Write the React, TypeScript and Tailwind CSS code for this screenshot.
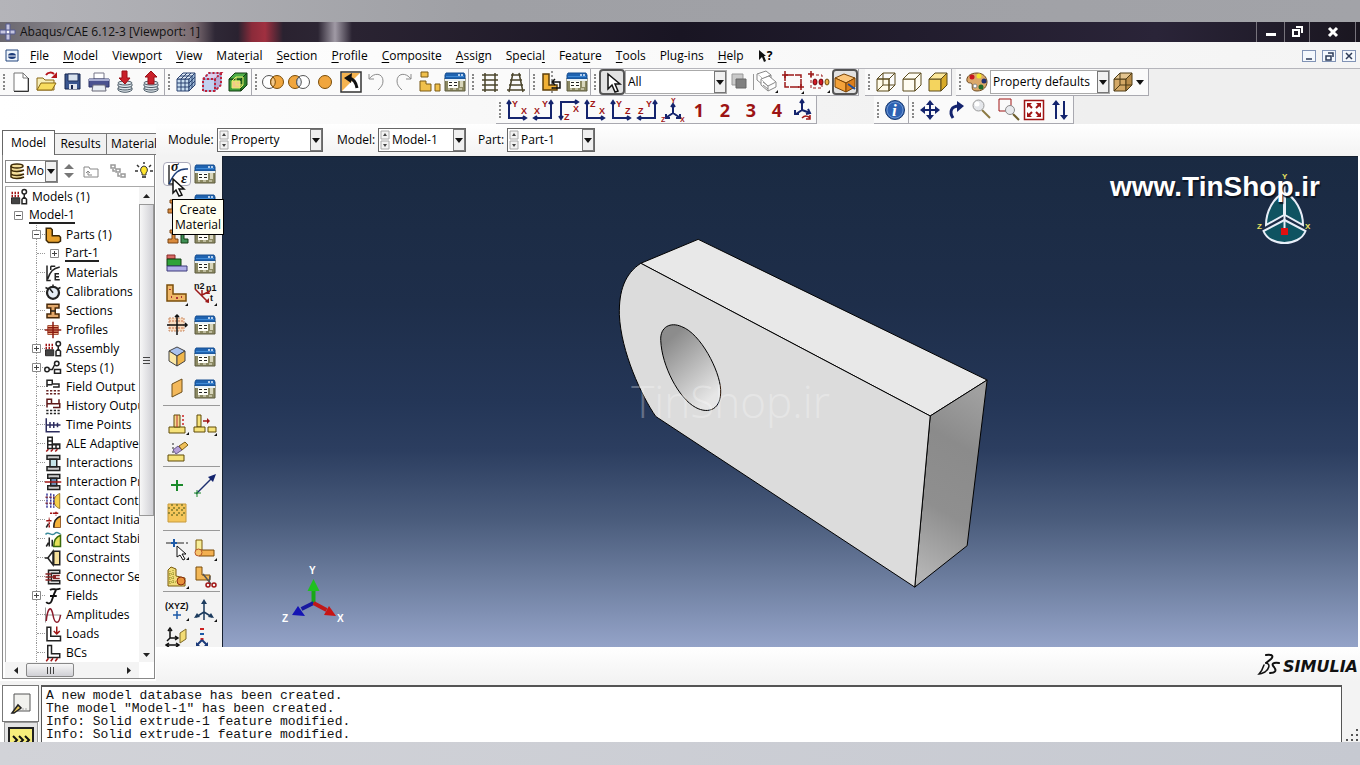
import React, { ReactNode } from "react";

function Svg({ children, size = 24 }: { children: ReactNode; size?: number }) {
  return (
    <svg width={size} height={size} viewBox="0 0 24 24" fill="none" stroke="#222" strokeWidth="1" className="block shrink-0" aria-hidden="true">
      {children}
    </svg>
  );
}

const cubeFront = "M3 9h12v12H3z";
const cubeTop = "M3 9l6-6h12l-6 6z";
const cubeSide = "M15 9l6-6v12l-6 6z";

function TableIcon() {
  return (
    <Svg>
      <path d="M2 8h20v13H2z" fill="#8b8963" stroke="#5c5a3e" />
      <path d="M3 3h18l1 2v4H2V5z" fill="#1f63b0" stroke="#174f91" />
      <path d="M3 6.500h18" stroke="#3f8ad6" />
      <path d="M15 5h2M18 5h2" stroke="#e8f2ff" strokeWidth="1.500" />
      <path d="M2 9h20v2H2z" fill="#e9f1f6" stroke="none" />
      <path d="M5 11h10v7H5z" fill="#fdfdf6" stroke="none" />
      <path d="M6 12.500h3M11 12.500h3M6 15.500h3M11 15.500h3" stroke="#222" />
      <path d="M17 11h3v6h-3z" fill="#d8d6bd" stroke="none" />
      <path d="M5 19h2M10 19h3M16 19h3" stroke="#f1efdc" />
    </Svg>
  );
}

function Cube({ front = "none", top = "none", side = "none", line = "#222", hidden = false, grid = false }: { front?: string; top?: string; side?: string; line?: string; hidden?: boolean; grid?: boolean }) {
  return (
    <Svg>
      <g stroke={line} strokeLinejoin="round">
        <path d={cubeFront} fill={front} />
        <path d={cubeTop} fill={top} />
        <path d={cubeSide} fill={side} />
        {hidden && <path d="M9 3v12h12M9 15l-6 6" />}
        {grid && <path d="M7 9v12M11 9v12M3 13h12M3 17h12M7 9l6-6M11 9l6-6M6 6h12M15 13l6-6M15 17l6-6M18 6v12" />}
      </g>
    </Svg>
  );
}

function Axes({ kind }: { kind: "xy" | "yx" | "xz" | "zx" | "yz" | "zy" }) {
  const left = kind === "yx" || kind === "zy";
  const [v, h] = { xy: ["Y", "X"], yx: ["Y", "X"], xz: ["Z", "X"], zx: ["Z", "X"], yz: ["Y", "Z"], zy: ["Y", "Z"] }[kind];
  if (kind === "xz") {
    return (
      <Svg>
        <path d="M4 21V4h16M2 18l2 3 2-3M18 2l3 2-3 2" stroke="#14246e" strokeWidth="2" />
        <g fill="#a01515" stroke="none" fontFamily="Liberation Sans" fontWeight="bold" fontSize="9">
          <text x="16" y="14">X</text>
          <text x="7" y="22">Z</text>
        </g>
      </Svg>
    );
  }
  return (
    <Svg>
      {left ? (
        <path d="M20 3v17H4M18 6l2-3 2 3M6 18l-3 2 3 2" stroke="#14246e" strokeWidth="2" />
      ) : (
        <path d="M4 3v17h16M2 6l2-3 2 3M18 18l3 2-3 2" stroke="#14246e" strokeWidth="2" />
      )}
      <g fill="#a01515" stroke="none" fontFamily="Liberation Sans" fontWeight="bold" fontSize="9">
        <text x={left ? 11 : 7} y="9">{v}</text>
        <text x={left ? 3 : 16} y="16">{h}</text>
      </g>
    </Svg>
  );
}

const I: Record<string, ReactNode> = {
  newFile: <Svg><path d="M5 3h9l5 5v13H5z" fill="#fff" stroke="#777" /><path d="M14 3v5h5" stroke="#777" /><path d="M5 21.500h14.500V8" stroke="#333" /></Svg>,
  open: <Svg><path d="M2 20V8h6l2 2h9v10z" fill="#f6eeb8" stroke="#8a6914" /><path d="M2 20l4-7h15l-4 7z" fill="#f7dc5e" stroke="#8a6914" /><path d="M11 5c2-3 6-3 8-1" stroke="#b5141b" strokeWidth="2" /><path d="M22 2v6h-6z" fill="#b5141b" stroke="none" /></Svg>,
  save: <Svg><path d="M4 4h15v15H4z" fill="#3a568f" stroke="#16264f" /><path d="M7 4h10v7H7z" fill="#d8e2ee" stroke="#20335f" /><path d="M8 14h8v5H8z" fill="#dfe4ec" stroke="none" /><path d="M10 15h2v4h-2z" fill="#16264f" stroke="none" /></Svg>,
  print: <Svg><path d="M7 3h10v6H7z" fill="#fff" stroke="#778" /><path d="M2 9h20v8H2z" fill="#4b528f" stroke="#2c3568" /><path d="M2 9h20v2H2z" fill="#a6abcf" stroke="none" /><path d="M6 15h12l1 6H5z" fill="#e9edf2" stroke="#667" /></Svg>,
  dbIn: <Svg><g fill="#dde5ea" stroke="#4c5a66"><path d="M5 18v2c3 3 11 3 14 0v-2" /><ellipse cx="12" cy="18" rx="7" ry="2" /><path d="M5 14v2c3 2 11 2 14 0v-2" /><ellipse cx="12" cy="13" rx="7" ry="2" /></g><path d="M9 1h5v7h3l-5 6-6-6h3z" fill="#c9202a" stroke="#9a1018" /></Svg>,
  dbOut: <Svg><g fill="#dde5ea" stroke="#4c5a66"><path d="M5 18v2c3 3 11 3 14 0v-2" /><ellipse cx="12" cy="18" rx="7" ry="2" /><path d="M5 14v2c3 2 11 2 14 0v-2" /><ellipse cx="12" cy="13" rx="7" ry="2" /></g><path d="M9 14h6V7h3l-6-6-6 6h3z" fill="#c9202a" stroke="#9a1018" /></Svg>,
  meshCube: <Cube front="#c9def0" top="#dfeaf6" side="#9dbad8" line="#2a4270" grid />,
  seedCube: <Svg><g fill="#c3d2f0" stroke="#7f86b5"><path d={cubeFront} /><path d={cubeTop} fill="#dcd0ee" /><path d={cubeSide} fill="#b9add8" /></g><path d="M3 9h12v12H3zM3 9l6-6h12l-6 6M21 3v12l-6 6" stroke="#c0203a" strokeWidth="2" strokeDasharray="2 2" /></Svg>,
  greenCube: <Svg><g stroke="#123d12"><path d={cubeFront} fill="#3e9b3a" /><path d={cubeTop} fill="#4fae48" /><path d={cubeSide} fill="#2c7f2a" /><path d="M6 11h8v7H6z" fill="#f2c98a" stroke="#e6ee6a" /><path d="M10 7h7v8h-7z" stroke="#e6ee6a" /><path d="M6 11l4-4M14 18l3-3" stroke="#e6ee6a" /></g></Svg>,
  union: <Svg><circle cx="8" cy="12" r="6.500" fill="#fff" stroke="#555" /><circle cx="16" cy="12" r="6.500" fill="#f0a63e" stroke="#7a4d0a" /><path d="M12 7a6.500 6.500 0 0 1 0 10 6.500 6.500 0 0 1 0-10z" fill="#f3c98c" stroke="#7a4d0a" /></Svg>,
  subtract: <Svg><circle cx="8" cy="12" r="6.500" fill="#f0a63e" stroke="#7a4d0a" /><circle cx="16" cy="12" r="6.500" fill="#fff" stroke="#555" /><path d="M12 7a6.500 6.500 0 0 1 0 10 6.500 6.500 0 0 1 0-10z" fill="#dfe6ee" stroke="#555" /></Svg>,
  circle: <Svg><circle cx="12" cy="12" r="6.500" fill="#f0a63e" stroke="#7a4d0a" /></Svg>,
  replace: <Svg><path d="M2 2h20v20H2z" fill="#fff" stroke="#333" strokeWidth="1.500" /><path d="M3 3h18L3 21z" fill="#f4b350" stroke="none" /><path d="M18 18c-1-6-3-9-8-10" stroke="#111" strokeWidth="3" /><path d="M5 8l8-5-1 10z" fill="#111" stroke="none" /></Svg>,
  undo: <Svg><path d="M4 9c5-7 14-6 14 2 0 4-2 6-5 9M4 4v5h5" stroke="#8c8c8c" /></Svg>,
  redo: <Svg><path d="M20 9C15 2 6 3 6 11c0 4 2 6 5 9M20 4v5h-5" stroke="#8c8c8c" /></Svg>,
  parts: <Svg><path d="M4 2h7v5H4zM3 11h6v3h5v7H3zM18 14h5v7h-5z" fill="#f0c04c" stroke="#7a5a14" /></Svg>,
  table: <TableIcon />,
  ladder: <Svg><path d="M7 3v19M17 3v19M4 5h16M4 10h16M4 15h16M4 20h16" stroke="#4b452c" strokeWidth="1.500" /></Svg>,
  ladder2: <Svg><path d="M9 3L5 22M15 3l4 19M7 5h10M6 10h12M5 15h14M3 20h18" stroke="#4b452c" strokeWidth="1.500" /></Svg>,
  partL: <Svg><path d="M4 4h6v11h8v5H4z" fill="#f0b035" stroke="#5e3f09" strokeWidth="1.500" /><path d="M13 1v23" stroke="#333" strokeDasharray="2 2" /><path d="M13 12h8v6h-8M16 9l-3 3 3 3" stroke="#111" strokeWidth="1.500" /></Svg>,
  arrow: <Svg><path d="M8 4v15l4-4 3 7 3-1-3-7h5z" fill="#fff" stroke="#111" strokeWidth="1.500" /></Svg>,
  layers: <Svg><path d="M4 4h11v11H4z" fill="#c9c9c9" stroke="#999" /><path d="M8 9h10v9H8z" fill="#808080" stroke="#666" /></Svg>,
  stack: <Svg><g stroke="#888" fill="#fff"><path d="M2 4l9-3 5 4-8 4z" /><path d="M2 4v6l6 5V9M8 9l8-4v3" /><path d="M6 9l8-3 7 6-8 4z" /><path d="M6 9v6l7 6v-5M13 21l8-4v-5" /><path d="M8 12l5 4M8 15l5 4" /></g><path d="M20 23h3v-3z" fill="#111" stroke="none" /></Svg>,
  dragRect: <Svg><path d="M4 5h16v12H4z" stroke="#9c1a1a" strokeWidth="1.500" strokeDasharray="9 1" /><path d="M4 1v7M1 5h6M17 17h6M20 14v6" stroke="#9c1a1a" strokeWidth="1.500" /><path d="M20 24h3v-3z" fill="#111" stroke="none" /></Svg>,
  pickDots: <Svg><path d="M4 5h11v13H4z" stroke="#9c1a1a" strokeDasharray="3 2" /><path d="M4 1v6M1 4h6" stroke="#9c1a1a" strokeWidth="1.500" /><ellipse cx="8" cy="12" rx="2" ry="3" fill="#d01722" stroke="#6d0a10" /><ellipse cx="14" cy="12" rx="2" ry="3" fill="#d01722" stroke="#6d0a10" /><ellipse cx="20" cy="12" rx="2" ry="3" fill="#eeb04a" stroke="#6b4a10" /><path d="M20 23h3v-3z" fill="#111" stroke="none" /></Svg>,
  orangeBox: <Svg><path d="M2 8l9-4 11 4-9 5z" fill="#fbc57a" stroke="#7a4406" /><path d="M2 8v9l11 5v-9z" fill="#f3a23a" stroke="#7a4406" /><path d="M13 13l9-5v9l-9 5z" fill="#dc7f1c" stroke="#7a4406" /><path d="M15 14l7 5" stroke="#1f4f9c" strokeWidth="2" /></Svg>,
  wireCube: <Cube line="#5a4a1c" hidden front="#fffbe8" />,
  hiddenCube: <Cube line="#5a4a1c" front="#fffdf2" top="#fffdf2" side="#fffdf2" />,
  shadedCube: <Cube line="#5a4a1c" front="#f4d45e" top="#fbe79a" side="#d8ab2b" />,
  tanCube: <Cube line="#4e3c16" front="#d3a866" top="#e3c48f" side="#b98d4b" hidden />,
  palette: <Svg><path d="M12 3C5 3 1 7 2 11c1 3 4 1 5 3s-2 7 5 7c7 0 10-5 10-9 0-5-4-9-10-9z" fill="#dba86a" stroke="#6b4a20" /><circle cx="7" cy="7" r="2.500" fill="#c9161d" stroke="none" /><circle cx="14" cy="6" r="2.500" fill="#f1e52e" stroke="none" /><circle cx="19" cy="11" r="2.500" fill="#22306e" stroke="none" /><circle cx="16" cy="17" r="2.500" fill="#226b2a" stroke="none" /><circle cx="10" cy="16" r="2" fill="#fff" stroke="#888" /></Svg>,
  iso: <Svg><path d="M12 6v9l-6 4M12 15l6 4M10 9l2-3 2 3M5 16v4h4M19 16v4h-4" stroke="#14246e" strokeWidth="2" /><g fill="#a01515" stroke="none" fontFamily="Liberation Sans" fontWeight="bold" fontSize="7"><text x="10" y="5">Y</text><text x="0" y="24">Z</text><text x="19" y="24">X</text></g></Svg>,
  isoRot: <Svg><path d="M11 3v9l-6 4M11 12l8 3M9 5l2-3 2 3M4 12v4h4M17 11l2 4-4 1" stroke="#14246e" strokeWidth="2" /><path d="M11 20c3-3 6-2 8 0M19 17v4h-4" stroke="#a01515" strokeWidth="1.500" /></Svg>,
  info: <Svg><circle cx="12" cy="12" r="9.500" fill="#2e62b3" stroke="#17386e" /><circle cx="12" cy="12" r="8" stroke="#6d94cf" /><text x="9" y="18" fill="#fff" stroke="none" fontFamily="Liberation Serif" fontStyle="italic" fontWeight="bold" fontSize="17">i</text></Svg>,
  pan: <Svg><path d="M12 5v15M5 12h15" stroke="#14246e" strokeWidth="2" /><path d="M12 2l4 5H8zM12 22l4-5H8zM2 12l5-4v8zM22 12l-5-4v8z" fill="#14246e" stroke="none" /></Svg>,
  rotate: <Svg><path d="M9 20c-4-6-2-12 6-12" stroke="#14246e" strokeWidth="3" /><path d="M13 3l7 5-7 6z" fill="#14246e" stroke="none" /></Svg>,
  zoom: <Svg><path d="M12 12l8 8" stroke="#8b7a42" strokeWidth="2" /><circle cx="8.500" cy="7.500" r="5.500" fill="#e4e6ea" stroke="#9a9a9a" /><circle cx="7" cy="6" r="2.500" fill="#fff" stroke="none" /></Svg>,
  boxZoom: <Svg><path d="M3 1h12v12H3z" stroke="#a01515" /><path d="M17 16l6 6" stroke="#6d5d2c" strokeWidth="2" /><circle cx="14" cy="12" r="4.500" fill="#e8eaee" stroke="#8a8a8a" /></Svg>,
  fit: <Svg><path d="M2.500 2.500h19v19h-19z" fill="#fff" stroke="#a01515" strokeWidth="1.500" /><path d="M6 6l4 4M18 6l-4 4M6 18l4-4M18 18l-4-4" stroke="#a01515" strokeWidth="2" /><path d="M5 5h5l-5 5zM19 5h-5l5 5zM5 19h5l-5-5zM19 19h-5l5-5z" fill="#a01515" stroke="none" /></Svg>,
  upDown: <Svg><path d="M8 5v16M16 3v15" stroke="#14246e" strokeWidth="2" /><path d="M8 2l4 5H4zM16 22l4-5h-8z" fill="#14246e" stroke="none" /></Svg>,
  material: <Svg><path d="M4 3v19h5" stroke="#333" strokeWidth="1.500" /><path d="M4 22C9 11 14 6 23 7" stroke="#1c3e7a" strokeWidth="1.500" /><g fill="#111" stroke="none" fontFamily="Liberation Serif" fontStyle="italic" fontWeight="bold"><text x="6" y="9" fontSize="14">σ</text><text x="16" y="21" fontSize="15">ε</text></g></Svg>,
  beam: <Svg><path d="M5 8h8v3h-3v6h3v4H3v-4h4v-6H5z" fill="#d98a3c" stroke="#7a4512" /><path d="M16 12h3v5h4v4h-7z" fill="#3f8f55" stroke="#123d12" /></Svg>,
  steps: <Svg><path d="M2 3h8v4H2z" fill="#d86a66" stroke="#8a2a26" /><path d="M2 7h14v7H2z" fill="#2fa23a" stroke="#123d12" /><path d="M2 14h20v5H2z" fill="#b0aee8" stroke="#3d3a7b" /></Svg>,
  plate: <Svg><path d="M2 3h6v9h13v7H2z" fill="#f0b868" stroke="#7a4d0a" strokeWidth="1.500" /><path d="M5 7v1M6 15h1M11 16h2M16 15h1" stroke="#a33" strokeWidth="2" /><path d="M20 24h3v-3z" fill="#111" stroke="none" /></Svg>,
  normals: <Svg><path d="M2 7l13 13M9 13l8-4M9 13l0-5" stroke="#9c1a1a" strokeWidth="1.500" /><path d="M15 7l-2 5h4zM16 21v-5l-4 4z" fill="#9c1a1a" stroke="none" /><g fill="#111" stroke="none" fontFamily="Liberation Sans" fontWeight="bold" fontSize="9"><text x="1" y="7">n2</text><text x="13" y="9">n1</text><text x="17" y="19">t</text></g><path d="M21 24h3v-3z" fill="#111" stroke="none" /></Svg>,
  cross: <Svg><path d="M4 5h15v13H4z" fill="#f9dcc0" stroke="#c98a62" strokeDasharray="2 1" /><path d="M4 8h15M4 15h15" stroke="#c9704a" strokeDasharray="2 1" /><path d="M12 2v20M2 12h20M10 4l2-2 2 2M20 10l2 2-2 2" stroke="#111" strokeWidth="1.500" /></Svg>,
  isoCube: <Svg><path d="M4 6l8-4 8 4-8 5z" fill="#a9c2ef" stroke="#444" /><path d="M4 6v10l8 5V11z" fill="#fbe7a4" stroke="#444" /><path d="M12 11l8-5v10l-8 5z" fill="#f0b64a" stroke="#444" /></Svg>,
  skin: <Svg><path d="M7 7l10-5v13L7 20z" fill="#f3b85a" stroke="#6e4f19" /></Svg>,
  stringer: <Svg><path d="M4 15h16v6H4z" fill="#f6e27a" stroke="#5e4a09" /><path d="M9 3h6v12H9z" fill="#f6d88a" stroke="#5e4a09" /><path d="M12 3v12" stroke="#b33" /><path d="M18 3v12" stroke="#c22" strokeWidth="1.500" strokeDasharray="2 2" /><path d="M21 23h3v-3z" fill="#111" stroke="none" /></Svg>,
  partition: <Svg><path d="M4 3h4v12H4z" fill="#f6e27a" stroke="#5e4a09" /><path d="M1 15h11v5H1zM15 15h8v5h-8z" fill="#f6e27a" stroke="#5e4a09" /><path d="M10 9h5" stroke="#a01515" strokeWidth="1.500" /><path d="M14 6l3 3-3 3z" fill="#a01515" stroke="none" /><path d="M21 24h3v-3z" fill="#111" stroke="none" /></Svg>,
  erase: <Svg><path d="M3 15h16v6H3z" fill="#f6e27a" stroke="#5e4a09" /><path d="M8 3v11" strokeDasharray="2 2" /><path d="M13 6l4 4-6 4-3-4z" fill="#b5a0d9" stroke="#6a5a8a" /><path d="M14 6l6-4 3 3-6 5z" fill="#f0c05a" stroke="#7e5f19" /></Svg>,
  plus: <Svg><path d="M12 7v11M6 12h12" stroke="#1a8a2a" strokeWidth="2" /></Svg>,
  axisLine: <Svg><path d="M3 21L20 4" stroke="#1c2f6e" strokeWidth="1.500" /><path d="M23 1l-8 3 5 5z" fill="#14246e" stroke="none" /><path d="M4 17v7M1 20h7" stroke="#1a8a2a" /></Svg>,
  gridIcon: <Svg><path d="M3 3h18v18H3z" fill="#f5c65a" stroke="#c79a3c" /><path d="M7 3v12M12 3v12M17 3v12M3 7h18M3 12h18" stroke="#7d7a2c" strokeWidth="1.500" strokeDasharray="2 3" /></Svg>,
  pickLine: <Svg><path d="M1 6h22" strokeDasharray="8 2" stroke="#222" /><path d="M9 2v8M6 6h6" stroke="#1c5aa8" strokeWidth="2" /><path d="M12 9v11l3-2 3 5 2-1-3-5h4z" fill="#fff" stroke="#111" /><path d="M21 23h3v-3z" fill="#111" stroke="none" /></Svg>,
  lPart: <Svg><path d="M3 3h6v11H3z" fill="#f7ee9a" stroke="#7a5a0a" /><path d="M6 13h15v6H6z" fill="#f3b052" stroke="#7a4d0a" /><circle cx="5.500" cy="15.500" r="3.500" fill="#f7c46a" stroke="#b5562c" /><path d="M21 24h3v-3z" fill="#111" stroke="none" /></Svg>,
  lPart2: <Svg><path d="M3 5l3-3 5 2v7l9 2v8H3z" fill="#f0dc7a" stroke="#7a5a0a" /><path d="M5 6v13M8 5v14M4 9h6M4 13h6M4 17h7" stroke="#8a8a20" strokeDasharray="1 1" /><circle cx="16" cy="16" r="4" fill="#e8923a" stroke="#8a2a10" /><path d="M21 24h3v-3z" fill="#111" stroke="none" /></Svg>,
  scissors: <Svg><path d="M3 2h6v8h8v5H3z" fill="#f3b858" stroke="#7a4d0a" /><path d="M10 9l8 10M17 11l-1 8" stroke="#555" strokeWidth="1.500" /><circle cx="15" cy="20" r="2" stroke="#a01515" strokeWidth="1.500" /><circle cx="21" cy="20" r="2" stroke="#a01515" strokeWidth="1.500" /></Svg>,
  xyz: <Svg><text x="0" y="11" fill="#111" stroke="none" fontFamily="Liberation Sans" fontWeight="bold" fontSize="9">(XYZ)</text><path d="M12 13v8M8 17h8" stroke="#1c5aa8" strokeWidth="1.500" /><path d="M21 23h3v-3z" fill="#111" stroke="none" /></Svg>,
  triad: <Svg><path d="M11 3v19M11 14l-8 5M11 14l8 5" stroke="#1c3b5e" strokeWidth="1.500" /><path d="M11 1l3 5H8zM1 20l3-5 3 4zM21 20l-3-5-3 4z" fill="#1c3b5e" stroke="none" /><path d="M21 24h3v-3z" fill="#111" stroke="none" /></Svg>,
  datum: <Svg><path d="M5 4v8h7M5 12l-3 3M3 5l2-3 2 3M10 10l3 2-3 2" stroke="#111" strokeWidth="1.500" /><path d="M15 7l6-4v10l-6 4z" fill="#f3dc74" stroke="#7e6a29" /><path d="M2 19h11M4 17l-3 2 3 2M11 17l3 2-3 2" stroke="#111" strokeWidth="1.500" /></Svg>,
  datum2: <Svg><path d="M9 2v2" stroke="#c22" strokeWidth="4" /><path d="M9 7v2" stroke="#1c5aa8" strokeWidth="4" /><path d="M9 12v2" stroke="#c22" strokeWidth="3" /><path d="M9 14l-5 5M9 14l5 5" stroke="#1c3b7a" strokeWidth="2" /><path d="M3 16v4h4zM15 16v4h-4z" fill="#1c3b7a" stroke="none" /></Svg>,
};

const T: Record<string, ReactNode> = {
  models: <Svg size={18}><path d="M3 20V5M7 20V5M11 20V5" stroke="#a01515" strokeWidth="2" strokeDasharray="3 1" /><path d="M2 13h11v8H2z" fill="#444" stroke="#111" /><circle cx="19" cy="5" r="3" strokeWidth="2" /><path d="M19 8v4M16 21v-6l3-3 3 3v6z" strokeWidth="2" /></Svg>,
  part: <Svg size={18}><path d="M3 3h6l2 2v8h9l2 2v5l-3 2H6l-3-3z" fill="#e8a12c" stroke="#3d2806" strokeWidth="2" /></Svg>,
  curve: <Svg size={18}><path d="M4 2v20h5M5 20C8 10 12 6 21 4" strokeWidth="2" /><path d="M9 3h6M9 3v5M20 13h-5v8h6M15 17h5" strokeWidth="2" /></Svg>,
  dial: <Svg size={18}><circle cx="12" cy="13" r="8" fill="#e6edf5" strokeWidth="3" /><path d="M12 13L8 8M12 2v3M2 6l4 2M22 6l-4 2" strokeWidth="2" /></Svg>,
  section: <Svg size={18}><path d="M4 3h16v5h-5v8h5v5H4v-5h5V8H4z" fill="#e2a76a" stroke="#4a2a0a" strokeWidth="2" /><path d="M9 12h6" strokeWidth="2" /></Svg>,
  profile: <Svg size={18}><path d="M5 6h14v12H5z" fill="#f2b08a" stroke="#8a2a10" /><path d="M12 1v22M1 12h22M5 9h14M5 15h14" stroke="#8a1a10" strokeWidth="2" /></Svg>,
  stepsT: <Svg size={18}><circle cx="4" cy="14" r="3" strokeWidth="2" /><path d="M7 14h4l3-6M14 14h8v5h-8z" strokeWidth="2" /><circle cx="17" cy="6" r="3" strokeWidth="2" /></Svg>,
  output: <Svg size={18}><path d="M4 12V3h7v5h9v5M4 9h7M12 12h9" strokeWidth="2" /><path d="M3 17h19M3 21h19" strokeWidth="2" strokeDasharray="3 2" stroke="#622" /></Svg>,
  history: <Svg size={18}><path d="M4 14V3h6v6h10V3M4 9h7M12 14h9V8" strokeWidth="2" stroke="#5e1717" /><path d="M3 18h19M3 22h19" strokeWidth="2" strokeDasharray="3 2" /></Svg>,
  time: <Svg size={18}><path d="M3 3v18h18M3 12h19M8 8v8M13 8v8M18 9v6" strokeWidth="2" stroke="#2c2c5e" /></Svg>,
  ale: <Svg size={18}><path d="M5 3h6v9h10v6H5zM5 8h6M5 13h16M11 12v6M16 12v6" strokeWidth="2" /><path d="M3 22l3-3M9 22l3-3M15 22l3-3" stroke="#a01515" strokeWidth="2" /></Svg>,
  inter: <Svg size={18}><path d="M4 2h17v5H4zM4 17h17v5H4z" fill="#ccc" strokeWidth="2" /><path d="M8 7h9v10H8z" fill="#c5e4e8" strokeWidth="2" /></Svg>,
  interP: <Svg size={18}><path d="M5 2h16v5H5zM5 17h16v5H5z" fill="#ccc" strokeWidth="2" /><path d="M9 7h8v10H9z" fill="#6c8ab0" strokeWidth="2" /><path d="M1 12h22" stroke="#a01515" strokeWidth="2" /></Svg>,
  contact: <Svg size={18}><path d="M21 2v20c-9-2-11-16 0-20z" fill="#f5cf4a" stroke="#7a5a0a" /><path d="M4 2v20M9 2v20M13 3v18" strokeWidth="2" stroke="#3b3b9c" strokeDasharray="3 1" /><path d="M2 7h12M2 15h12" strokeWidth="2" stroke="#803040" strokeDasharray="3 2" /></Svg>,
  contactI: <Svg size={18}><path d="M22 7v15h-9c0-8 3-13 9-15z" fill="#f5b23a" stroke="#7a3a0a" /><path d="M22 7c-6 2-9 7-9 15M3 22l3-5" strokeWidth="2" /><path d="M7 22V9M3 13h8M8 3h12M16 1v5" strokeWidth="2" stroke="#a01515" strokeDasharray="3 1" /></Svg>,
  contactS: <Svg size={18}><path d="M22 7v15h-9c0-8 3-13 9-15z" fill="#e7e05a" stroke="#3a6a0a" strokeWidth="2" /><path d="M3 22l3-5M7 22V10M11 22V13" strokeWidth="2" /><path d="M2 6c4-5 8 3 12-1s5 0 8 0" strokeWidth="2" stroke="#3a8a9a" /></Svg>,
  constraint: <Svg size={18}><path d="M1 12h6M12 3L5 12l7 9z" strokeWidth="2" /><path d="M13 3h8v18h-8z" fill="#f5e09a" strokeWidth="2" /></Svg>,
  connector: <Svg size={18}><path d="M6 3h15v4H10v10h11v4H6z" fill="#ddd" strokeWidth="2" /><path d="M2 8h8M2 12h14M2 16h8M12 10h9M12 14h9" stroke="#822" strokeWidth="2" /></Svg>,
  field: <Svg size={18}><path d="M8 4c4-3 7 1 14-2M16 4C13 9 12 14 10 19c-1 3-5 4-7 1M8 12h9" stroke="#111" strokeWidth="2.500" /></Svg>,
  amp: <Svg size={18}><path d="M2 2v20M1 12h22" stroke="#777" /><path d="M3 20C5 0 10 0 12 12s8 14 10 0" stroke="#8a1a2a" strokeWidth="2" /></Svg>,
  load: <Svg size={18}><path d="M4 3h5v12h13v6H4z" strokeWidth="2" /><path d="M17 2v9M13 8l4 4 4-4" stroke="#a01515" strokeWidth="2" /></Svg>,
  bc: <Svg size={18}><path d="M5 2h5v11h11v5H5z" strokeWidth="2" /><path d="M3 23l3-4M9 23l3-4M15 23l3-4" stroke="#a01515" strokeWidth="2" /></Svg>,
};

const menus: [string, number][] = [
  ["File", 0], ["Model", 0], ["Viewport", 4], ["View", 0], ["Material", 4], ["Section", 0], ["Profile", 0], ["Composite", 0],
  ["Assign", 0], ["Special", 6], ["Feature", 4], ["Tools", 0], ["Plug-ins", -1], ["Help", 0],
];

type Node = { label: string; icon?: string; level: number; toggle?: "+" | "-"; current?: boolean };

const tree: Node[] = [
  { label: "Models (1)", icon: "models", level: 0 },
  { label: "Model-1", level: 1, toggle: "-", current: true },
  { label: "Parts (1)", icon: "part", level: 2, toggle: "-" },
  { label: "Part-1", level: 3, toggle: "+", current: true },
  { label: "Materials", icon: "curve", level: 2 },
  { label: "Calibrations", icon: "dial", level: 2 },
  { label: "Sections", icon: "section", level: 2 },
  { label: "Profiles", icon: "profile", level: 2 },
  { label: "Assembly", icon: "models", level: 2, toggle: "+" },
  { label: "Steps (1)", icon: "stepsT", level: 2, toggle: "+" },
  { label: "Field Output Requests", icon: "output", level: 2 },
  { label: "History Output Requests", icon: "history", level: 2 },
  { label: "Time Points", icon: "time", level: 2 },
  { label: "ALE Adaptive Mesh", icon: "ale", level: 2 },
  { label: "Interactions", icon: "inter", level: 2 },
  { label: "Interaction Properties", icon: "interP", level: 2 },
  { label: "Contact Controls", icon: "contact", level: 2 },
  { label: "Contact Initializations", icon: "contactI", level: 2 },
  { label: "Contact Stabilizations", icon: "contactS", level: 2 },
  { label: "Constraints", icon: "constraint", level: 2 },
  { label: "Connector Sections", icon: "connector", level: 2 },
  { label: "Fields", icon: "field", level: 2, toggle: "+" },
  { label: "Amplitudes", icon: "amp", level: 2 },
  { label: "Loads", icon: "load", level: 2 },
  { label: "BCs", icon: "bc", level: 2 },
];

const toolbox: { rows: string[][]; cell: string; group: string }[] = [
  { rows: [["material", "table"], ["beam", "table"], ["beam", "table"], ["steps", "table"], ["plate", "normals"]], cell: "h-[30px]", group: "pt-[3px]" },
  { rows: [["cross", "table"], ["isoCube", "table"], ["skin", "table"]], cell: "h-8", group: "border-b" },
  { rows: [["stringer", "partition"], ["erase", ""]], cell: "h-7", group: "border-b pt-1" },
  { rows: [["plus", "axisLine"], ["gridIcon", ""]], cell: "h-7", group: "border-b pt-1 pb-[3px]" },
  { rows: [["pickLine", "lPart"], ["lPart2", "scissors"]], cell: "h-7", group: "border-b pt-1" },
  { rows: [["xyz", "triad"], ["datum", "datum2"]], cell: "h-7", group: "pt-1" },
];

const messages = [
  "A new model database has been created.",
  'The model "Model-1" has been created.',
  "Info: Solid extrude-1 feature modified.",
  "Info: Solid extrude-1 feature modified.",
];

function Grip() {
  return <span className="w-2 shrink-0 h-4 flex justify-center"><span className="border-l-2 border-dotted border-[#888]" /></span>;
}

function ToolButton({ name, pressed }: { name: string; pressed?: boolean }) {
  return (
    <button type="button" aria-label={name} className={`w-[26px] h-[26px] shrink-0 flex items-center justify-center ${pressed ? "rounded-sm border-2 border-[#555] bg-[#e2e2e2]" : ""}`}>
      {I[name]}
    </button>
  );
}

function Group({ children, className = "" }: { children: ReactNode; className?: string }) {
  return <div className={`flex items-center h-full border-r border-b border-[#a9a9b0] bg-[#fafafa] shrink-0 ${className}`}>{children}</div>;
}

function Arrow() {
  return (
    <span className="pointer-events-none w-3 shrink-0 self-stretch flex items-center justify-center border border-[#777] bg-[#f0f0f0]">
      <svg width="8" height="5" viewBox="0 0 8 5" className="shrink-0"><path d="M0 0h8L4 5z" fill="#111" /></svg>
    </span>
  );
}

function Combo({ label, value, spin, className }: { label: string; value: string; spin?: boolean; className: string }) {
  return (
    <div className={`flex items-center h-6 bg-white border shrink-0 ${className}`}>
      {spin && (
        <svg width="10" height="20" viewBox="0 0 10 20" className="shrink-0 ml-px"><path d="M1 1h8v8H1zM1 11h8v8H1z" fill="#f3f3f3" stroke="#aaa" /><path d="M3 6h4L5 3zM3 14h4l-2 3z" fill="#444" /></svg>
      )}
      <select aria-label={label} defaultValue={value} className="appearance-none flex-1 min-w-0 bg-transparent outline-none pl-0.5">
        <option>{value}</option>
      </select>
      <Arrow />
    </div>
  );
}

function TitleBar() {
  return (
    <header className="h-5 shrink-0 flex items-center bg-[linear-gradient(90deg,#6a676f_0,#8d8a8f_80px,#8a8083_170px,#7a6a70_195px,#2f2836_215px,#2a2230_238px,#8b2b3a_252px,#a03040_265px,#2a2230_283px,#2c2533_318px,#a09aa5_335px,#2a2332_352px,#191523_50%,#2a2438_85%,#1a1620_100%)] text-[#111]">
      <svg width="16" height="18" viewBox="0 0 16 18" className="shrink-0"><path d="M6 1h4v16H6zM0 7h15v4H0z" fill="#c5c5e0" stroke="#555a90" /><path d="M7 8h2v2H7z" fill="#fff" /></svg>
      <h1 className="pl-1 whitespace-nowrap">Abaqus/CAE 6.12-3 [Viewport: 1]</h1>
      <div className="ml-auto flex h-full text-white">
        <button type="button" aria-label="Minimize" className="w-7 border-l border-[#77737c] flex items-center justify-center"><svg width="12" height="12"><path d="M1 7h10v3H1z" fill="#fff" /></svg></button>
        <button type="button" aria-label="Restore" className="w-[26px] border-x border-[#77737c] flex items-center justify-center"><svg width="12" height="12" fill="none" stroke="#fff" strokeWidth="2"><path d="M2 4h6v6H2zM5 1h6v6" /></svg></button>
        <button type="button" aria-label="Close" className="w-[46px] mr-1 border-r border-[#77737c] flex items-center justify-center"><svg width="12" height="12" stroke="#fff" strokeWidth="3"><path d="M2 2l8 8M10 2l-8 8" /></svg></button>
      </div>
    </header>
  );
}

function MenuBar() {
  return (
    <nav className="h-[26px] shrink-0 flex items-center bg-[linear-gradient(90deg,#ffffff,#f4f4f4)] pl-1 pt-0.5">
      <svg width="16" height="16" viewBox="0 0 16 16" className="shrink-0 mr-1"><path d="M2 2h12v11H2z" fill="#eef4fb" stroke="#24467e" /><ellipse cx="8" cy="8" rx="4" ry="3" fill="#1c3b7a" /><path d="M4 8h8" stroke="#fff" /></svg>
      {menus.map(([name, at]) => (
        <button key={name} type="button" className="px-[7px] whitespace-nowrap shrink-0 first-of-type:pl-1.5">
          {at < 0 ? name : <>{name.slice(0, at)}<u className="underline-offset-2">{name[at]}</u>{name.slice(at + 1)}</>}
        </button>
      ))}
      <button type="button" aria-label="Context help" className="ml-2 flex items-center font-bold">
        <svg width="8" height="12" viewBox="0 0 8 12"><path d="M0 0l7 6H5l2 5-2 1-2-5-3 3z" fill="#111" /></svg>?
      </button>
      <div className="ml-auto flex gap-1.5 pr-1">
        {["M3 9h6", "M3 6h5v4H3zM5 3h5v4", "M3 3l6 6M9 3l-6 6"].map((d, i) => (
          <button key={d} type="button" aria-label={["Minimize viewport", "Restore viewport", "Close viewport"][i]} className="w-[14px] h-3 border border-[#8193b5] bg-[#f4f8fd] flex items-center justify-center">
            <svg width="12" height="12" viewBox="0 0 12 12" fill="none" stroke="#2d3b58" strokeWidth="1.500"><path d={d} /></svg>
          </button>
        ))}
      </div>
    </nav>
  );
}

function Toolbars() {
  return (
    <div className="shrink-0 bg-[linear-gradient(90deg,#ffffff,#f6f6f6_45%,#efefef_80%)]">
      <div className="h-7 flex border-t border-[#b5b5bb]">
        <Group>
          <Grip />
          {["newFile", "open", "save", "print", "dbIn", "dbOut"].map((n) => <ToolButton key={n} name={n} />)}
        </Group>
        <Group>
          <Grip />
          {["meshCube", "seedCube", "greenCube"].map((n) => <ToolButton key={n} name={n} />)}
        </Group>
        <Group>
          <Grip />
          {["union", "subtract", "circle", "replace", "undo", "redo", "parts", "table"].map((n) => <ToolButton key={n} name={n} />)}
        </Group>
        <Group>
          <Grip />
          {["ladder", "ladder2"].map((n) => <ToolButton key={n} name={n} />)}
        </Group>
        <Group>
          <Grip />
          {["partL", "table"].map((n) => <ToolButton key={n} name={n} />)}
        </Group>
        <Group className="mr-1.5">
          <Grip />
          <ToolButton name="arrow" pressed />
          <Combo label="Selection filter" value="All" className="w-[102px] border-[#aaa]" />
          <ToolButton name="layers" />
          <span className="h-4 border-l border-[#999]" />
          {["stack", "dragRect", "pickDots"].map((n) => <ToolButton key={n} name={n} />)}
          <ToolButton name="orangeBox" pressed />
        </Group>
        <Group className="mr-1">
          <Grip />
          {["wireCube", "hiddenCube", "shadedCube"].map((n) => <ToolButton key={n} name={n} />)}
        </Group>
        <Group>
          <Grip />
          <ToolButton name="palette" />
          <Combo label="Color code" value="Property defaults" className="w-[120px] border-[#aaa]" />
          <ToolButton name="tanCube" />
          <button type="button" aria-label="Color options" className="w-3"><svg width="8" height="5"><path d="M0 0h8L4 5z" fill="#111" /></svg></button>
        </Group>
      </div>
      <div className="h-7 flex pl-[496px]">
        <Group className="mr-[57px]">
          <Grip />
          {(["xy", "yx", "xz", "zx", "yz", "zy"] as const).map((k) => (
            <button key={k} type="button" aria-label={`View ${k}`} className="w-[26px] flex justify-center"><Axes kind={k} /></button>
          ))}
          <ToolButton name="iso" />
          {["1", "2", "3", "4"].map((n) => (
            <button key={n} type="button" className="w-[26px] text-center font-['Open_Sans'] font-bold text-lg text-[#9c1414]">{n}</button>
          ))}
          <ToolButton name="isoRot" />
        </Group>
        <Group>
          <Grip />
          <ToolButton name="info" />
        </Group>
        <Group>
          <Grip />
          {["pan", "rotate", "zoom", "boxZoom", "fit", "upDown"].map((n) => <ToolButton key={n} name={n} />)}
        </Group>
      </div>
    </div>
  );
}

function TreeRow({ node }: { node: Node }) {
  return (
    <li className="h-[19px] flex items-center whitespace-nowrap">
      {node.level === 0 && <span className="w-1 shrink-0" />}
      {node.level === 1 && <span className="w-2 shrink-0" />}
      {node.level >= 2 && <span className="w-[25px] shrink-0" />}
      {node.level >= 2 && (
        <span className="w-3 h-full shrink-0 relative border-l border-dotted border-[#999] ml-[5px]">
          <span className="absolute left-0 top-[9px] w-2 border-t border-dotted border-[#999]" />
          {node.level === 2 && node.toggle && <Toggle sign={node.toggle} className="absolute -left-[5px] top-[5px]" />}
        </span>
      )}
      {node.level === 3 && node.toggle && <Toggle sign={node.toggle} className="ml-0.5 mr-1" />}
      {node.level === 1 && node.toggle && <Toggle sign={node.toggle} className="mr-1" />}
      {node.level === 2 && <span className="-ml-1 mr-1">{T[node.icon!]}</span>}
      {node.level === 0 && <span className="mr-1">{T[node.icon!]}</span>}
      <span className={node.current ? "border-b-2 border-[#222] leading-[15px] ml-0.5" : ""}>{node.label}</span>
    </li>
  );
}

function Toggle({ sign, className }: { sign: "+" | "-"; className: string }) {
  return (
    <button type="button" aria-label={sign === "+" ? "Expand" : "Collapse"} className={`shrink-0 w-[9px] h-[9px] bg-white ${className}`}>
      <svg width="9" height="9" stroke="#444" fill="none" className="block"><path d="M.5.5h8v8h-8z" stroke="#888" /><path d={sign === "+" ? "M2 4.500h5M4.500 2v5" : "M2 4.500h5"} /></svg>
    </button>
  );
}

function ModelPanel() {
  return (
    <aside className="w-[156px] shrink-0 flex flex-col pt-1.5 pl-0.5 bg-white">
      <div role="tablist" className="flex items-end h-[25px] overflow-hidden shrink-0">
        <button role="tab" aria-selected="true" className="w-[53px] h-full shrink-0 border border-b-0 border-[#666] bg-white">Model</button>
        <button role="tab" aria-selected="false" className="w-[52px] h-[22px] shrink-0 border border-l-0 border-[#777] bg-[#f1f1f1]">Results</button>
        <button role="tab" aria-selected="false" className="w-[60px] h-[22px] shrink-0 border border-l-0 border-[#777] bg-[#f1f1f1] text-left pl-1">Material</button>
      </div>
      <div className="flex-1 min-h-0 border-x border-b border-[#888] flex flex-col mb-0.5 pl-0.5 pt-1 mr-px">
        <div className="flex items-center h-6 shrink-0">
          <div className="w-[53px] h-[23px] border border-[#888] flex items-center">
            <svg width="18" height="18" viewBox="0 0 18 18" className="shrink-0 ml-0.5"><g fill="#f5df9a" stroke="#3d2a06" strokeWidth="1.500"><path d="M3 12v3c2 2 9 2 13 0M3 8v4c2 2 9 2 13 0M3 4v4c2 2 9 2 13 0" /><ellipse cx="9" cy="4" rx="6" ry="2" /></g></svg>
            <select aria-label="Tree" defaultValue="Mo" className="appearance-none w-[19px] shrink-0 bg-transparent outline-none overflow-hidden"><option>Mo</option></select>
            <Arrow />
          </div>
          <button type="button" aria-label="Move" className="w-6 flex justify-center"><svg width="10" height="16"><path d="M0 6h10L5 1zM0 10h10l-5 5z" fill="#777" /></svg></button>
          <button type="button" aria-label="Up one level" className="w-[22px] flex justify-center"><svg width="16" height="14" fill="none" stroke="#888"><path d="M1 3h5l1 2h8v8H1zM5 11V7M3 9l2-2 2 2M5 11h4" /></svg></button>
          <button type="button" aria-label="Link" className="w-[26px] flex justify-center ml-1"><svg width="16" height="16" fill="none" stroke="#999" strokeWidth="1.500"><path d="M1 2h4v3H1zM6 6h4v3H6zM11 11h4v3h-4zM3 6v2h2M8 10v3h2" /></svg></button>
          <button type="button" aria-label="Tips" className="w-5 flex justify-center ml-1"><svg width="18" height="18" viewBox="0 0 18 18"><path d="M9 4a4 4 0 0 1 2 7v2H7v-2a4 4 0 0 1 2-7z" fill="#ffe62e" stroke="#333" /><path d="M7 14h4v2H7z" fill="#555" /><path d="M9 0v2M2 3l2 2M16 3l-2 2M0 9h3M15 9h3" stroke="#333" strokeWidth="1.500" /></svg></button>
        </div>
        <div className="flex flex-1 min-h-0 border-t border-l border-[#aaa] mt-[3px]">
          <ul className="flex-1 min-w-0 overflow-hidden">
            {tree.map((n) => <TreeRow key={n.label} node={n} />)}
          </ul>
          <div className="w-[15px] shrink-0 flex flex-col items-center bg-[#f4f4f4]">
            <button type="button" aria-label="Scroll up" className="h-[17px] flex items-center"><svg width="7" height="4"><path d="M0 4h7L3.500 0z" fill="#222" /></svg></button>
            <div className="w-full h-[312px] border border-[#999] bg-[linear-gradient(90deg,#f7f7f7,#d0d0d5)] flex items-center justify-center"><svg width="7" height="8" stroke="#444"><path d="M0 1.500h7M0 4.500h7M0 7.500h7" /></svg></div>
            <button type="button" aria-label="Scroll down" className="mt-auto h-[15px] flex items-center"><svg width="7" height="4"><path d="M0 0h7L3.500 4z" fill="#222" /></svg></button>
          </div>
        </div>
        <div className="h-4 shrink-0 flex items-center bg-[#f4f4f4] mr-[15px]">
          <button type="button" aria-label="Scroll left" className="w-[21px] flex justify-center"><svg width="4" height="7"><path d="M4 0v7L0 3.500z" fill="#222" /></svg></button>
          <div className="w-12 h-[14px] border border-[#888] rounded-xs bg-[linear-gradient(#f7f7f7,#d0d0d5)] flex items-center justify-center"><svg width="8" height="7" stroke="#444"><path d="M1.500 0v7M4.500 0v7M7.500 0v7" /></svg></div>
          <button type="button" aria-label="Scroll right" className="ml-auto mr-2"><svg width="4" height="7"><path d="M0 0v7l4-3.500z" fill="#222" /></svg></button>
        </div>
      </div>
    </aside>
  );
}

function Toolbox() {
  return (
    <div className="w-[66px] shrink-0 pl-[7px] pr-[2px] relative bg-[#f3f3f3]">
      <div className="h-full overflow-hidden">
        {toolbox.map((g, i) => (
          <div key={i} className={`border-[#999] ${g.group}`}>
            {g.rows.map((row, r) => (
              <div key={r} className={`flex items-center ${g.cell}`}>
                {row.map((n, c) => n && (
                  <button key={c} type="button" aria-label={n} className={`w-7 h-6 flex items-center justify-center shrink-0 ${n === "material" ? "border border-[#aab] rounded-sm bg-white" : ""}`}>{I[n]}</button>
                ))}
              </div>
            ))}
          </div>
        ))}
      </div>
      <div role="tooltip" className="absolute z-10 left-4 top-[43px] w-[52px] border border-black bg-[#fffff0] text-center leading-[15px] py-0.5">
        Create Material
      </div>
      <svg width="16" height="22" viewBox="0 0 16 22" className="absolute z-20 left-4 top-[22px]"><path d="M1 1v14l3-3 3 6 3-1-3-6h5z" fill="#fff" stroke="#111" strokeWidth="1.500" /></svg>
    </div>
  );
}

function Viewport() {
  return (
    <section aria-label="Viewport: 1" className="flex-1 min-w-0 relative overflow-hidden mr-0.5 border-t border-l border-[#16202f] bg-[linear-gradient(180deg,#1a2a42_0%,#1e2e4a_30%,#243657_50%,#2c3e60_60%,#4a5c7c_74%,#6c7d9e_86%,#94a3c8_100%)]">
      <svg viewBox="222 156 1136 491" className="w-full h-full" strokeLinejoin="round">
        <defs>
          <linearGradient id="hole" x1="0.100" y1="0.200" x2="0.600" y2="1"><stop offset="0" stopColor="#8c8c8c" /><stop offset="0.500" stopColor="#b9b9b9" /><stop offset="1" stopColor="#e6e6e6" /></linearGradient>
          <linearGradient id="side" x1="0.600" y1="0" x2="0.400" y2="1"><stop offset="0" stopColor="#a0a0a0" /><stop offset="0.300" stopColor="#8b8b8b" /><stop offset="0.650" stopColor="#8f8f8f" /><stop offset="1" stopColor="#b4b4b4" /></linearGradient>
        </defs>
        <path d="M640 262.500L697.500 238.500 987 379.500 930 415.500z" fill="#e8e8e8" stroke="#000" />
        <path d="M930 415.500L987 379.500 967 545.500 914.500 587z" fill="url(#side)" stroke="#000" />
        <path d="M640 262.500L930 415.500 914.500 587 655 416C641 396 620 351 618.500 314 618 290 624 273 640 262.500z" fill="#dcdcdc" stroke="#000" />
        <path d="M660 340C659 326 670 321 681 326 700 333 719 370 720 389 721 409 708 414 695 407 678 398 661 365 660 340z" fill="url(#hole)" stroke="#000" />
      </svg>
      <div className="absolute inset-x-0 top-[218px] pr-[120px] text-center font-['Open_Sans'] font-light text-[44px] leading-[52px] text-white/30">TinShop.ir</div>
      <svg width="68" height="64" viewBox="280 562 68 64" className="absolute left-[57px] bottom-[20px]">
        <path d="M313.500 602V586" stroke="#18a818" strokeWidth="4" /><path d="M313.500 578l6 12h-12z" fill="#1fc01f" />
        <path d="M313.500 602l-12 6" stroke="#1818a0" strokeWidth="4" /><path d="M292 614l6-9 7 10z" fill="#1414b4" />
        <path d="M313.500 602l13 7" stroke="#c01818" strokeWidth="4" /><path d="M336 615l-12-1 5-9z" fill="#c81414" />
        <g fill="#fff" fontFamily="Liberation Sans" fontWeight="bold" fontSize="10"><text x="309" y="573">Y</text><text x="282" y="621">Z</text><text x="337" y="621">X</text></g>
      </svg>
      <svg width="60" height="76" viewBox="1254 172 60 76" className="absolute right-[44px] top-[15px]">
        <path d="M1284 193c-10 4-18 18-18 32l18-10z" fill="#0f5361" stroke="#e8eef8" strokeWidth="2" />
        <path d="M1285 193c10 4 18 18 18 32l-18-10z" fill="#0f5361" stroke="#e8eef8" strokeWidth="2" />
        <path d="M1284.500 220l21 11c-6 16-36 16-42 0z" fill="#0f5361" stroke="#e8eef8" strokeWidth="2" />
        <path d="M1284.500 182v48" stroke="#e8eef8" strokeWidth="2" /><path d="M1281 228h7v7h-7z" fill="#e01010" />
        <g fill="#e8e060" fontFamily="Liberation Sans" fontWeight="bold" fontSize="8"><text x="1282" y="179">Y</text><text x="1257" y="229">Z</text><text x="1305" y="229">X</text></g>
      </svg>
      <div className="absolute right-[38px] top-[14px] font-['Liberation_Sans'] font-bold text-[28px] leading-8 text-white [text-shadow:1px_2px_1px_#0b1220]">www.TinShop.ir</div>
    </section>
  );
}

function PromptArea() {
  return (
    <div className="h-[34px] shrink-0 flex items-center justify-end pr-0.5 pt-1.5 bg-[linear-gradient(#ffffff,#f3f3f3)]">
      <svg width="26" height="24" viewBox="0 0 26 24" fill="none" stroke="#111" strokeLinecap="round" className="-mt-1">
        <path d="M9 2c6-1 8 1 5 4l-5 4" strokeWidth="2" />
        <path d="M9 10c5 1 3 6-1 9-2 1-4 2-6 2 2-2 4-6 5-9" strokeWidth="1.500" />
        <path d="M22 10c-6-1-8 1-5 4 3 4 1 6-4 6" strokeWidth="2" />
      </svg>
      <span className="font-['DejaVu_Sans'] font-bold italic text-base leading-4 text-[#111]">SIMULIA</span>
    </div>
  );
}

function MessageArea() {
  return (
    <footer className="h-[61px] shrink-0 flex pt-1 bg-[#f3f3f3] overflow-hidden">
      <div className="w-[39px] shrink-0 pl-0.5 bg-white">
        <button type="button" aria-label="Message area" className="w-full h-[37px] border border-[#777] bg-white flex items-center justify-center">
          <svg width="24" height="26" viewBox="0 0 24 26"><path d="M5 3h16v17H5z" fill="#f1f1ee" stroke="#555" /><path d="M7 18h12" stroke="#aaa" strokeDasharray="2 1" /><path d="M3 22l6-8 3 3-7 5z" fill="#e9c95a" stroke="#222" strokeWidth="1.500" /></svg>
        </button>
        <button type="button" aria-label="Command line" className="ml-0.5 w-[34px] h-8 border border-[#999] bg-[#e4e4e4] flex justify-center pt-1">
          <svg width="26" height="24" viewBox="0 0 26 24"><path d="M1 1h24v22H1z" fill="#f7ee7c" stroke="#222" strokeWidth="2" /><path d="M5 9l4 4-4 4M11 9l4 4-4 4M17 9l4 4-4 4" fill="none" stroke="#111" strokeWidth="2" /></svg>
        </button>
      </div>
      <div className="flex-1 ml-0.5 bg-white border-t-2 border-x border-[#555] pl-1 pt-0.5 font-['Liberation_Mono'] text-[13px] leading-[13px] text-[#111]">
        {messages.map((m, i) => <p key={i}>{m}</p>)}
      </div>
      <svg width="18" height="14" className="self-end shrink-0" fill="#555"><path d="M14 1h2v2h-2zM9 6h2v2H9zM14 6h2v2h-2zM4 11h2v2H4zM9 11h2v2H9zM14 11h2v2h-2z" /></svg>
    </footer>
  );
}

export default function App() {
  return (
    <div className="h-screen flex flex-col overflow-hidden bg-white font-['Open_Sans',sans-serif] text-[12px] text-black">
      <div className="h-[22px] shrink-0 bg-[linear-gradient(90deg,#b4b4b9,#9fa0a5_35%,#a2a3a8)]" />
      <TitleBar />
      <MenuBar />
      <Toolbars />
      <main className="flex-1 min-h-0 flex">
        <ModelPanel />
        <div className="flex-1 min-w-0 flex flex-col">
          <div className="h-8 shrink-0 flex items-center pl-3 bg-[linear-gradient(#ffffff,#f3f3f3)]">
            <span className="w-[49px]">Module:</span>
            <Combo label="Module" value="Property" spin className="w-[106px] mr-3.5 border-[#666]" />
            <span className="w-[41px]">Model:</span>
            <Combo label="Model" value="Model-1" spin className="w-[88px] mr-3 border-[#666]" />
            <span className="w-[29px]">Part:</span>
            <Combo label="Part" value="Part-1" spin className="w-[88px] border-[#666]" />
          </div>
          <div className="flex-1 min-h-0 flex bg-white">
            <Toolbox />
            <Viewport />
          </div>
          <PromptArea />
        </div>
      </main>
      <MessageArea />
      <div className="h-[23px] shrink-0 bg-[linear-gradient(90deg,#d2d3d8,#c6c9d1)]" />
    </div>
  );
}
